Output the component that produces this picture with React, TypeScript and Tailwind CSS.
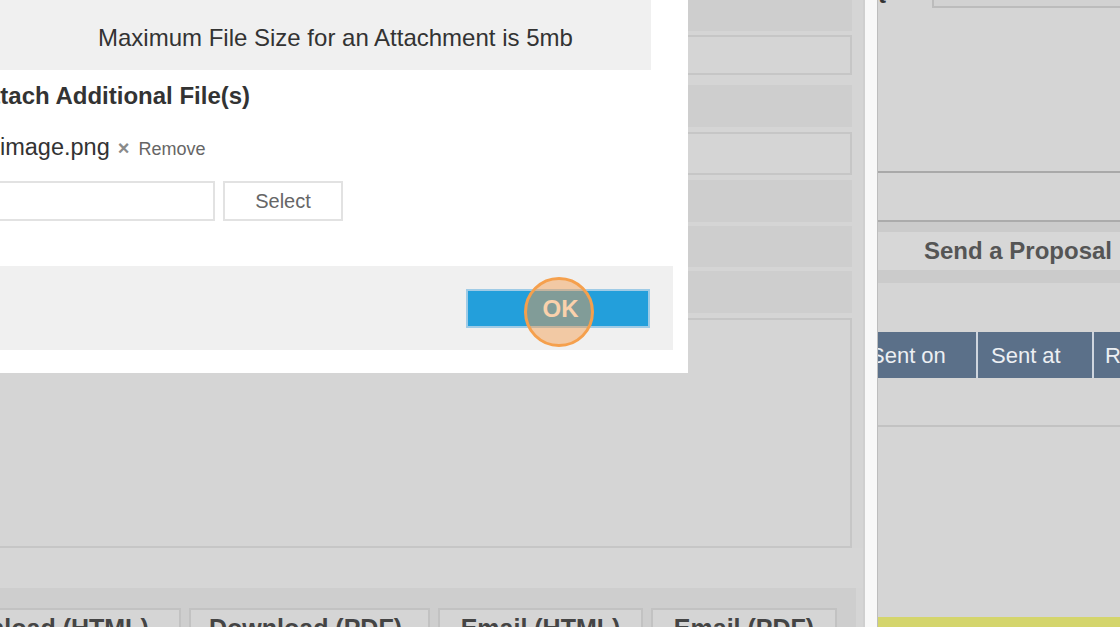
import React from 'react';

const rowDark = 'bg-[#cecece]';
const rowBox = 'bg-[#d5d5d5] border-y-2 border-r-2 border-[#c6c6c6]';

function BackRows() {
  return (
    <div className="flex flex-col pr-[11px]">
      <div className={`h-[31px] ${rowDark}`} />
      <div className={`h-[40px] mt-[4px] ${rowBox}`} />
      <div className={`h-[42px] mt-[10px] ${rowDark}`} />
      <div className={`h-[43px] mt-[5px] ${rowBox}`} />
      <div className={`h-[42px] mt-[5px] ${rowDark}`} />
      <div className={`h-[41px] mt-[4px] ${rowDark}`} />
      <div className={`h-[42px] mt-[4px] ${rowDark}`} />
      <div className={`h-[230px] mt-[5px] ${rowBox}`} />
    </div>
  );
}

function ActionButton({ label, width, className = '' }: { label: string; width: number; className?: string }) {
  return (
    <div
      className={`h-[40px] shrink-0 bg-[#d5d5d5] border-2 border-[#c2c2c2] flex items-center justify-center text-[25px] leading-[28px] font-bold text-[#444] whitespace-nowrap ${className}`}
      style={{ width }}
    >
      {label}
    </div>
  );
}

function AttachModal() {
  return (
    <div className="absolute top-0 left-0 w-[688px] h-[373px] bg-white flex flex-col">
      <div className="w-[651px] h-[70px] shrink-0 bg-[#f0f0f0] flex items-center pl-[98px] pt-[6px] text-[24px] text-[#333] whitespace-nowrap">
        Maximum File Size for an Attachment is 5mb
      </div>

      <div className="mt-[12px] ml-[-25px] text-[24px] leading-[28px] font-bold text-[#333] whitespace-nowrap">
        Attach Additional File(s)
      </div>

      <div className="mt-[23px] flex items-baseline whitespace-nowrap leading-[28px]">
        <span className="text-[23.5px] text-[#333]">image.png</span>
        <span className="ml-[8px] text-[20px] font-bold text-[#8a8a8a]">×</span>
        <span className="ml-[9px] text-[18px] text-[#666]">Remove</span>
      </div>

      <div className="mt-[18px] flex">
        <div className="ml-[-45px] w-[260px] h-[40px] border-2 border-[#e2e2e2] bg-white" />
        <div className="ml-[8px] w-[120px] h-[40px] border-2 border-[#e2e2e2] bg-white flex items-center justify-center text-[20px] text-[#666]">
          Select
        </div>
      </div>

      <div className="mt-[45px] w-[673px] h-[84px] bg-[#f0f0f0] pt-[23px] pl-[466px]">
        <div className="w-[184px] h-[39px] bg-[#239fdb] border-2 border-[#9fcbe6] flex items-center justify-center pl-[5px] text-[24px] font-bold text-white">
          OK
        </div>
      </div>

      {/* click highlight */}
      <div className="absolute left-[524px] top-[277px] w-[70px] h-[70px] rounded-full border-[3px] border-[#f5a04d] bg-[#f49a48]/45" />
    </div>
  );
}

function RightPanel() {
  return (
    <div className="w-[281px] shrink-0 flex flex-col overflow-hidden border-l border-[#bdbdbd] bg-[#d5d5d5]">
      <div className="h-[8px] shrink-0 flex overflow-hidden">
        <div className="w-[54px] overflow-hidden">
          <span className="block mt-[-18px] text-[24px] leading-[26px] font-bold text-[#333]">t</span>
        </div>
        <div className="flex-1 bg-[#d2d2d2] border-l-2 border-b-2 border-[#bcbcbc]" />
      </div>

      <div className="mt-[163px] h-[2px] shrink-0 bg-[#a9a9a9]" />

      <div className="mt-[47px] h-[2px] shrink-0 bg-[#ababab]" />
      <div className="h-[10px] shrink-0 bg-[#cbcbcb]" />
      <div className="h-[38px] shrink-0 bg-[#d7d7d7] flex items-center justify-center text-[24px] font-bold text-[#555] whitespace-nowrap">
        Send a Proposal
      </div>
      <div className="h-[13px] shrink-0 bg-[#cbcbcb]" />

      <div className="mt-[49px] ml-[-21px] h-[46px] shrink-0 flex bg-[#5b7089] text-[22px] text-[#eceff3] whitespace-nowrap">
        <div className="w-[121px] shrink-0 px-[13px] flex items-center border-r-2 border-[#cfd6df]">Sent on</div>
        <div className="w-[116px] shrink-0 px-[13px] flex items-center border-r-2 border-[#cfd6df]">Sent at</div>
        <div className="flex-1 px-[11px] flex items-center">Read</div>
      </div>

      <div className="mt-[47px] h-[2px] shrink-0 bg-[#c2c2c2]" />

      <div className="flex-1" />
      <div className="h-[10px] shrink-0 bg-[#d4d56c]" />
    </div>
  );
}

export default function App() {
  return (
    <div className="w-[1120px] h-[627px] overflow-hidden flex bg-[#d5d5d5] font-['Liberation_Sans',Arial,sans-serif]">
      <div className="w-[863px] shrink-0 relative flex flex-col">
        <BackRows />
        <div className="h-[40px] shrink-0 bg-[#d6d6d6]" />
        <div className="flex-1 mr-[7px] bg-[#cecece] pt-[20px] flex overflow-hidden">
          <div className="ml-[-76px] flex gap-[8px]">
            <ActionButton label="Download (HTML)" width={257} className="pr-[20px]" />
            <ActionButton label="Download (PDF)" width={241} className="pr-[8px]" />
            <ActionButton label="Email (HTML)" width={205} />
            <ActionButton label="Email (PDF)" width={186} />
          </div>
        </div>
        <AttachModal />
      </div>
      <div className="w-[14px] shrink-0 bg-[#f8f8f8] border-l-2 border-[#cfcfcf]" />
      <RightPanel />
    </div>
  );
}
